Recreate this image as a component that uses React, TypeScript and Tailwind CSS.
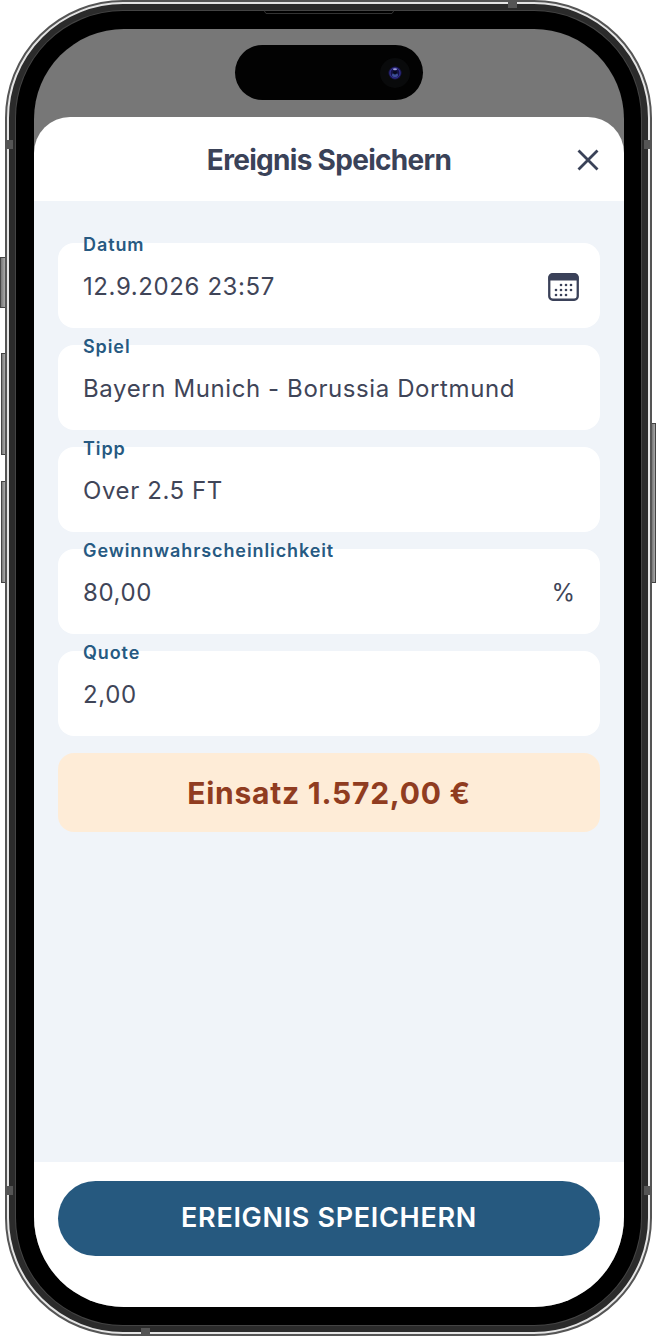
import { type ReactNode } from 'react';

const fields: { id: string; label: string; value: string; suffix?: ReactNode }[] = [
  { id: 'datum', label: 'Datum', value: '12.9.2026 23:57', suffix: <CalendarButton /> },
  { id: 'spiel', label: 'Spiel', value: 'Bayern Munich - Borussia Dortmund' },
  { id: 'tipp', label: 'Tipp', value: 'Over 2.5 FT' },
  { id: 'gewinn', label: 'Gewinnwahrscheinlichkeit', value: '80,00', suffix: <span className="text-2xl text-[#3f4558]">%</span> },
  { id: 'quote', label: 'Quote', value: '2,00' },
];

function CalendarButton() {
  const dots = [
    [13, 12], [18, 12], [23, 12],
    [8, 17], [13, 17], [18, 17], [23, 17],
    [8, 22], [13, 22], [18, 22],
  ];

  return (
    <button type="button" aria-label="Datum wählen" className="-mr-1">
      <svg width="31" height="28" viewBox="0 0 31 28" className="block">
        <rect x="1.25" y="1.25" width="28.5" height="25.5" rx="3.5" fill="none" stroke="#3a4159" strokeWidth="2.3" />
        <path d="M0.5 7.5V4.5a4 4 0 0 1 4-4h22a4 4 0 0 1 4 4v3z" fill="#3a4159" />
        {dots.map(([x, y]) => (
          <circle key={`${x}-${y}`} cx={x} cy={y} r="1.3" fill="#3a4159" />
        ))}
      </svg>
    </button>
  );
}

function Field({ id, label, value, suffix }: (typeof fields)[number]) {
  return (
    <div className="relative flex h-[85px] items-center rounded-2xl bg-white px-[25px] pt-0.5">
      <label htmlFor={id} className="absolute -top-2.5 left-[25px] text-lg leading-6 font-semibold tracking-wider text-[#275a82]">
        {label}
      </label>
      <input id={id} type="text" defaultValue={value} className="h-full min-w-0 flex-1 bg-transparent text-2xl tracking-wide text-[#3f4558] outline-none" />
      {suffix}
    </div>
  );
}

function SideButton({ className }: { className: string }) {
  return <span className={`absolute border border-[#444] bg-linear-to-r from-[#777] to-[#aaa] ${className}`} />;
}

function Hardware() {
  return (
    <div aria-hidden="true">
      <SideButton className="top-[257px] left-0 h-[51px] w-1.5" />
      <SideButton className="top-[353px] left-px h-[102px] w-[5px]" />
      <SideButton className="top-[481px] left-px h-[102px] w-[5px]" />
      <SideButton className="top-[423px] right-0 h-[160px] w-[5px]" />
    </div>
  );
}

function AntennaBands() {
  return (
    <div aria-hidden="true">
      <span className="absolute top-[138px] -left-0.5 h-[9px] w-2 bg-[#555]" />
      <span className="absolute top-[138px] -right-0.5 h-[9px] w-2 bg-[#555]" />
      <span className="absolute bottom-[139px] -left-0.5 h-[9px] w-2 bg-[#555]" />
      <span className="absolute -right-0.5 bottom-[139px] h-[9px] w-2 bg-[#555]" />
      <span className="absolute -top-0.5 right-[133px] h-2 w-[9px] bg-[#555]" />
      <span className="absolute -bottom-0.5 left-[134px] h-2 w-[9px] bg-[#555]" />
    </div>
  );
}

function DynamicIsland() {
  return (
    <div className="flex h-[55px] w-[188px] items-center justify-end rounded-full bg-[#020202] pr-3">
      <svg width="32" height="32" viewBox="0 0 32 32">
        <circle cx="16" cy="16" r="15" fill="#090a0b" />
        <circle cx="16" cy="16" r="6.5" fill="#1a1850" />
        <circle cx="16" cy="16" r="5" fill="#151246" stroke="#37339b" strokeWidth="1" />
        <ellipse cx="16" cy="18" rx="3" ry="2" fill="#3c5097" />
        <circle cx="16" cy="15.5" r="2" fill="#080a20" />
        <ellipse cx="16" cy="12.3" rx="2" ry="1" fill="#9a9bd8" />
      </svg>
    </div>
  );
}

export default function App() {
  return (
    <div className="relative flex min-h-screen bg-white pr-1 pl-[5px] font-['Inter','Liberation_Sans',sans-serif]">
      <Hardware />
      <div className="relative flex flex-1 rounded-[118px] border-2 border-[#555] bg-[#e4e4e4] p-0.5">
        <div className="relative flex flex-1 rounded-[114px] border-[6px] border-[#2b2b2b] bg-[#444] p-px">
          <div className="relative flex flex-1 rounded-[107px] bg-black py-[18px] pr-[17px] pl-[18px]">
            <svg width="130" height="5" viewBox="0 0 130 5" className="absolute -top-px left-1/2 -translate-x-1/2" aria-hidden="true">
              <path d="M0 0.5 2 3.5H128L130 0.5" fill="none" stroke="#333" />
            </svg>
            <main className="flex flex-1 flex-col overflow-hidden rounded-[90px] bg-[#777]">
              <div className="flex justify-center pt-4 pb-[17px]">
                <DynamicIsland />
              </div>

              <form className="flex flex-1 flex-col overflow-hidden rounded-t-[36px] bg-white" onSubmit={(e) => e.preventDefault()}>
                <header className="grid h-[84px] grid-cols-[24px_1fr_24px] items-center px-6 pt-0.5">
                  <h1 className="col-start-2 text-center text-[28px] leading-9 font-bold tracking-tight text-[#3a4258]">Ereignis Speichern</h1>
                  <button type="button" aria-label="Schließen">
                    <svg width="24" height="24" viewBox="0 0 24 24" className="block">
                      <path d="M2.5 2.5 21.5 21.5M21.5 2.5 2.5 21.5" stroke="#3a4258" strokeWidth="2.8" />
                    </svg>
                  </button>
                </header>

                <div className="flex flex-1 flex-col gap-[17px] bg-[#f0f4f9] px-6 pt-[42px] pb-6">
                  {fields.map((field) => (
                    <Field key={field.id} {...field} />
                  ))}
                  <output className="flex h-[79px] items-center justify-center rounded-2xl bg-[#feecd7] text-3xl font-bold tracking-wide text-[#903c20]">
                    Einsatz 1.572,00 €
                  </output>
                </div>

                <footer className="px-6 pt-[19px] pb-[51px]">
                  <button type="submit" className="h-[75px] w-full rounded-full bg-[#26597f] text-[27px] font-semibold tracking-wide text-white">
                    EREIGNIS SPEICHERN
                  </button>
                </footer>
              </form>
            </main>
          </div>
        </div>
        <AntennaBands />
      </div>
    </div>
  );
}
